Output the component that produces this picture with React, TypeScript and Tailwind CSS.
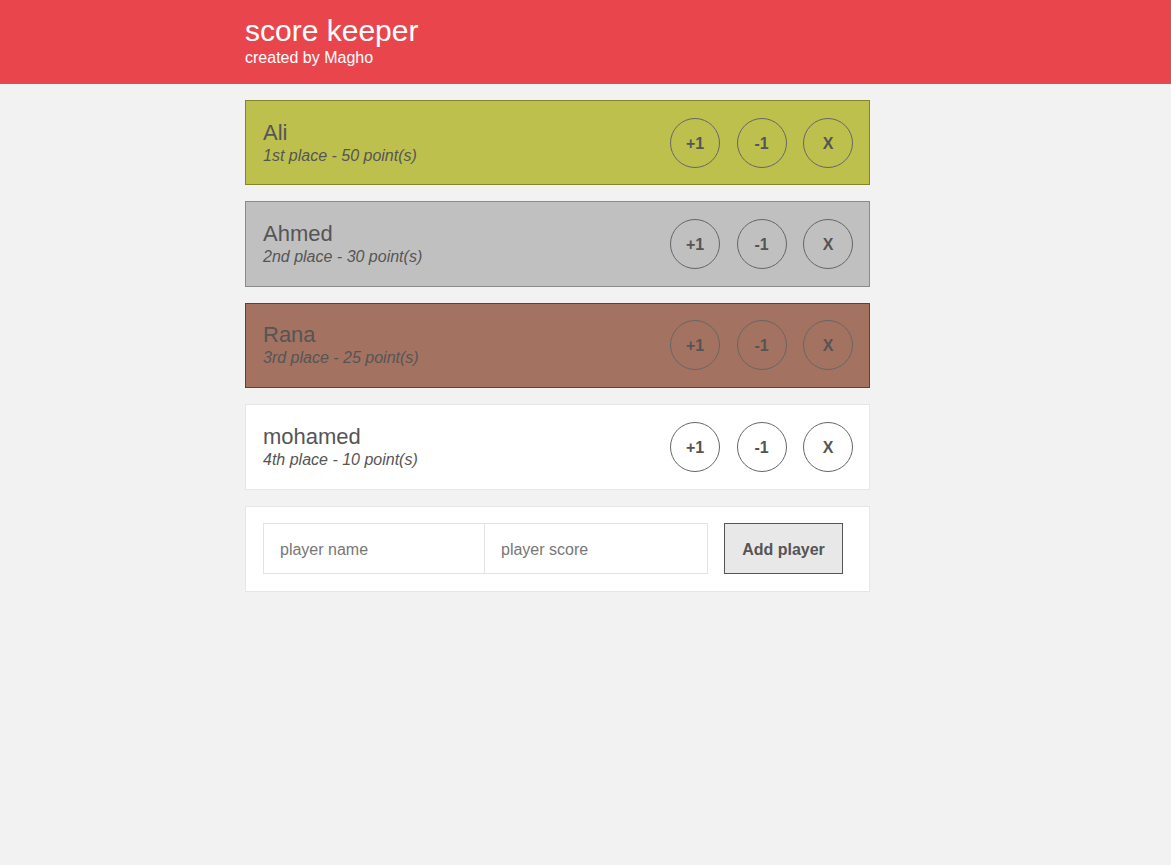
const players = [
  { name: 'Ali', place: '1st', score: 50, card: 'bg-[#bec04e] border-[#85842a]' },
  { name: 'Ahmed', place: '2nd', score: 30, card: 'bg-[#c0c0c0] border-[#8a8a8a]' },
  { name: 'Rana', place: '3rd', score: 25, card: 'bg-[#a47261] border-[#5e4035]' },
  { name: 'mohamed', place: '4th', score: 10, card: 'bg-white border-[#e6e6e6]' },
];

function CircleButton({ label }: { label: string }) {
  return (
    <button className="w-[50px] h-[50px] rounded-full border border-[#666] bg-transparent text-[16px] leading-[20px] pt-[2px] font-bold text-[#555] flex items-center justify-center">
      {label}
    </button>
  );
}

export default function App() {
  return (
    <div className="min-h-[865px] bg-[#f2f2f2] font-['Liberation_Sans',Arial,sans-serif] text-[#555]">
      <header className="h-[84px] bg-[#e8464c] text-white">
        <div className="w-[681px] mx-auto pt-[13px]">
          <h1 className="text-[30px] leading-[36px]">score keeper</h1>
          <p className="text-[16px] leading-[18px]">created by Magho</p>
        </div>
      </header>

      <main className="w-[681px] mx-auto pt-4 flex flex-col gap-4">
        {players.map((p) => (
          <div
            key={p.name}
            className={`w-[625px] h-[85.4px] border pl-[17px] pr-4 flex items-center justify-between ${p.card}`}
          >
            <div className="pt-[1px]">
              <h2 className="text-[22px] leading-[24px]">{p.name}</h2>
              <p className="mt-[1px] text-[16px] leading-[20px] italic">
                {p.place} place - {p.score} point(s)
              </p>
            </div>
            <div className="flex gap-[16.5px]">
              <CircleButton label="+1" />
              <CircleButton label="-1" />
              <CircleButton label="X" />
            </div>
          </div>
        ))}

        <form className="w-[625px] h-[86px] bg-white border border-[#e6e6e6] px-[17px] flex items-center">
          <input
            placeholder="player name"
            className="w-[222px] h-[51px] border border-[#e3e3e3] px-4 pt-[2px] text-[16px] placeholder:text-[#777] outline-none"
          />
          <input
            placeholder="player score"
            className="w-[223px] h-[51px] border border-[#e3e3e3] border-l-0 px-4 pt-[2px] text-[16px] placeholder:text-[#777] outline-none"
          />
          <button
            type="button"
            className="ml-4 w-[119px] h-[51px] bg-[#e8e8e8] border border-[#555] pt-[3px] text-[16px] font-bold text-[#555]"
          >
            Add player
          </button>
        </form>
      </main>
    </div>
  );
}
